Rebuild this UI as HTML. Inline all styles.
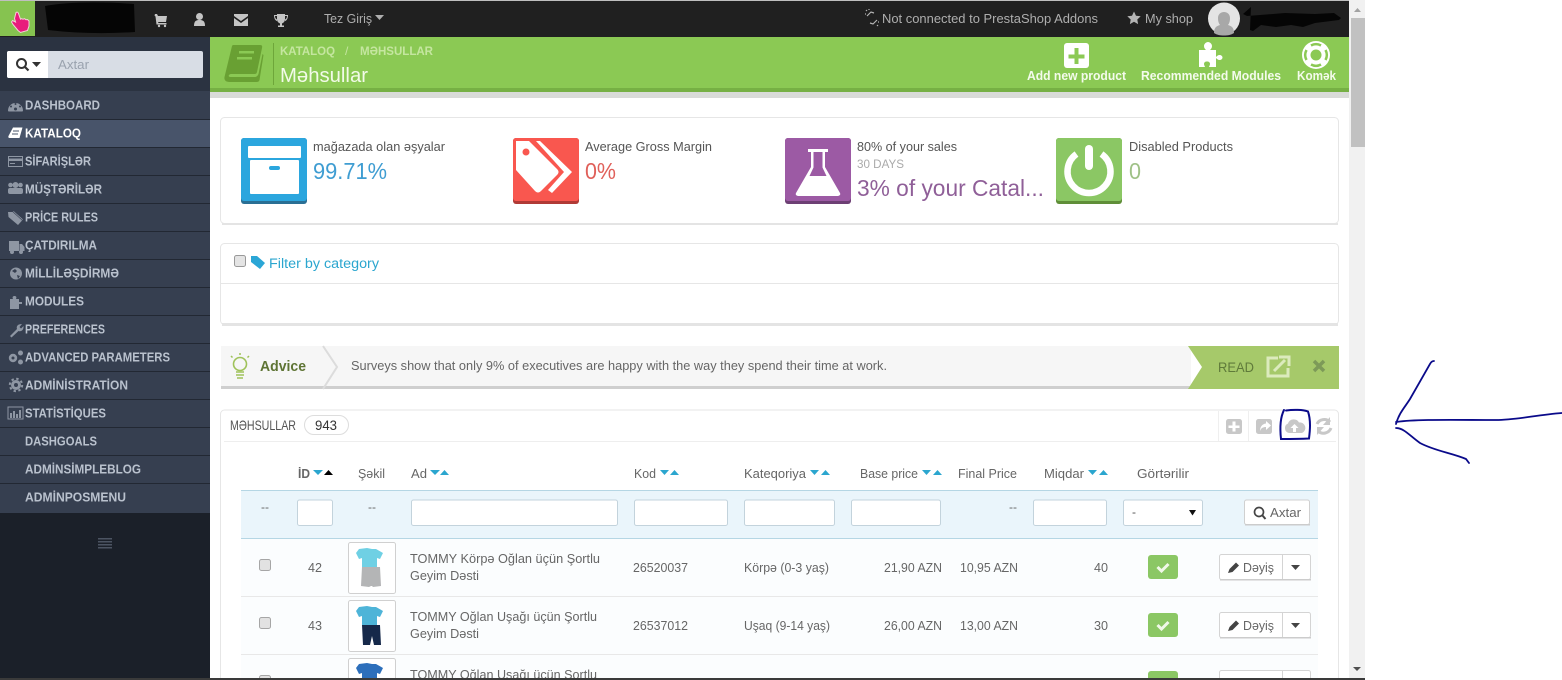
<!DOCTYPE html>
<html><head><meta charset="utf-8"><title>Məhsullar</title>
<style>
html,body{margin:0;padding:0;background:#fff;width:1562px;height:680px;overflow:hidden}
svg{display:block}
text{font-family:"Liberation Sans","DejaVu Sans",sans-serif;white-space:pre}
.m text{font-size:13px;font-weight:bold;fill:#b9c1cd}
.c text{font-size:13px;fill:#666}
.h text{font-size:13px;fill:#666}
.i{fill:#fff;stroke:#c3d3dc;stroke-width:1}
</style></head><body>
<svg xmlns="http://www.w3.org/2000/svg" width="1562" height="680" viewBox="0 0 1562 680">
<rect width="1562" height="680" fill="#fff"/>
<!-- sidebar -->
<rect x="0" y="37" width="210" height="643" fill="#1b2029"/>
<rect x="0" y="37" width="210" height="54" fill="#2b3341"/>
<rect x="0" y="91" width="210" height="422" fill="#363f50"/>
<rect x="0" y="120" width="210" height="27" fill="#48546a"/>
<g fill="#222833"><rect y="119" width="210" height="1"/><rect y="147" width="210" height="1"/><rect y="175" width="210" height="1"/><rect y="203" width="210" height="1"/><rect y="231" width="210" height="1"/><rect y="259" width="210" height="1"/><rect y="287" width="210" height="1"/><rect y="315" width="210" height="1"/><rect y="343" width="210" height="1"/><rect y="371" width="210" height="1"/><rect y="399" width="210" height="1"/><rect y="427" width="210" height="1"/><rect y="455" width="210" height="1"/><rect y="483" width="210" height="1"/></g>
<rect x="7" y="51" width="196" height="27" rx="2" fill="#d8dde5"/>
<path d="M9 51h39v27H9a2 2 0 0 1-2-2V53a2 2 0 0 1 2-2z" fill="#fff"/>
<circle cx="21.500" cy="63.500" r="4.500" fill="none" stroke="#333" stroke-width="2"/><path d="M25 67l3.500 3.500" stroke="#333" stroke-width="2.200"/>
<path d="M32 62h9l-4.500 5z" fill="#333"/>
<text x="58" y="69" font-size="12.500" fill="#9aa2ae" textLength="31" lengthAdjust="spacingAndGlyphs">Axtar</text>
<g class="m">
<text x="25" y="109.500" textLength="75" lengthAdjust="spacingAndGlyphs">DASHBOARD</text>
<text x="25" y="137.500" textLength="56" lengthAdjust="spacingAndGlyphs" style="fill:#fff">KATALOQ</text>
<text x="25" y="165.500" textLength="66" lengthAdjust="spacingAndGlyphs">SİFARİŞLƏR</text>
<text x="25" y="193.500" textLength="77" lengthAdjust="spacingAndGlyphs">MÜŞTƏRİLƏR</text>
<text x="25" y="221.500" textLength="73" lengthAdjust="spacingAndGlyphs">PRİCE RULES</text>
<text x="25" y="249.500" textLength="72" lengthAdjust="spacingAndGlyphs">ÇATDIRILMA</text>
<text x="25" y="277.500" textLength="94" lengthAdjust="spacingAndGlyphs">MİLLİLƏŞDİRMƏ</text>
<text x="25" y="305.500" textLength="59" lengthAdjust="spacingAndGlyphs">MODULES</text>
<text x="25" y="333.500" textLength="80" lengthAdjust="spacingAndGlyphs">PREFERENCES</text>
<text x="25" y="361.500" textLength="145" lengthAdjust="spacingAndGlyphs">ADVANCED PARAMETERS</text>
<text x="25" y="389.500" textLength="103" lengthAdjust="spacingAndGlyphs">ADMİNİSTRATİON</text>
<text x="25" y="417.500" textLength="81" lengthAdjust="spacingAndGlyphs">STATİSTİQUES</text>
<text x="25" y="445.500" textLength="72" lengthAdjust="spacingAndGlyphs">DASHGOALS</text>
<text x="25" y="473.500" textLength="116" lengthAdjust="spacingAndGlyphs">ADMİNSİMPLEBLOG</text>
<text x="25" y="501.500" textLength="101" lengthAdjust="spacingAndGlyphs">ADMİNPOSMENU</text>
</g>
<!-- sidebar icons -->
<g fill="#8e96a3">
<path d="M8 110.500a7.500 7.500 0 1 1 15 0c0 .8-.5 1-1 1h-13c-.5 0-1-.2-1-1z"/><g fill="#363f50"><circle cx="11" cy="106.500" r="1"/><circle cx="15.500" cy="104" r="1"/><circle cx="20" cy="106.500" r="1"/><circle cx="15.500" cy="109" r="1.500"/></g>
<path d="M13 127.500h9.500l-3 10.500H9.500c-1 0-1.500-1-1-2z" fill="#fff"/><path d="M13 131h6M12 134h6" stroke="#48546a"/>
<path d="M8.500 156.500h14v10h-14z" fill="none" stroke="#8e96a3"/><rect x="8" y="158.500" width="15" height="2.500"/><rect x="10" y="163" width="5" height="1"/>
<circle cx="10.500" cy="185" r="2.300"/><circle cx="20.500" cy="185" r="2.300"/><circle cx="15.500" cy="185" r="3"/><rect x="8" y="188" width="15" height="6" rx="2"/>
<path d="M8 212h6l9 7.500-5 5.500-9.500-8z"/><path d="M12 211l2 0 9 8 0 2z" stroke="#363f50" stroke-width=".6"/>
<path d="M9 241h10v10H9zM19.500 244h2.500l2.500 3v4h-5z"/><circle cx="12" cy="252" r="2"/><circle cx="21" cy="252" r="2"/>
<circle cx="16" cy="273.500" r="6"/><path d="M12 271l3-2 2 2-2 2zM17 275l3 1-2 3z" fill="#363f50"/>
<path d="M10 299h3c-1-2 0-3 1.500-3s2.500 1 1.500 3h3v3h3v2h-3v5h-9z"/>
<path d="M10 336l7-7c-1-3 1-5 5-5l-2.500 3 1.500 1.500 2.500-2.500c.5 4-2.500 6-5 5l-7 6.500z"/>
<circle cx="13" cy="358" r="4.200"/><circle cx="13" cy="358" r="1.500" fill="#363f50"/><circle cx="20.500" cy="353" r="2.500"/><circle cx="20.500" cy="362" r="2.500"/>
<circle cx="16" cy="385" r="5"/><circle cx="16" cy="385" r="6.200" fill="none" stroke="#8e96a3" stroke-width="2" stroke-dasharray="2.400 2.470"/><circle cx="16" cy="385" r="2" fill="#363f50"/>
<path d="M8 407h15v12H8z" fill="none" stroke="#8e96a3"/><path d="M10 413h2v5h-2zM13 411h2v7h-2zM16 414h2v4h-2zM19 410h2v8h-2z"/>
<g fill="#4c5462"><rect x="98" y="538" width="14" height="1.500"/><rect x="98" y="541" width="14" height="1.500"/><rect x="98" y="544" width="14" height="1.500"/><rect x="98" y="547" width="14" height="1.500"/></g>
</g>
<!-- top bar -->
<rect x="0" y="0" width="1349" height="37" fill="#202020"/>
<rect x="0" y="0" width="1349" height="1" fill="#bfbfbf"/>
<rect x="0" y="1" width="35" height="35" fill="#86c350"/>
<path d="M16 12.500c1-.8 2-.3 2.400.7l2.100 6 1-.5 1.500.5 1.500-.5 1.500 1 1.500-.2 1.500 1.500 0 5-1.500 4.500-7 2-2.500-2-5-6-1.500-2.500 1-1.500 3 1.500-1-3.500z" fill="#e81c7c" stroke="#f5cfd8" stroke-width="1"/>
<path d="M45 6Q80 0 134 4L135 32Q90 35 48 30z" fill="#050505"/>
<g fill="#c4c4c4">
<path d="M155 14h2l1 2h9l-1 6h-8l.5 1h8v1.500h-10l-1-8-1-1z"/><circle cx="159" cy="26" r="1.200"/><circle cx="165" cy="26" r="1.200"/>
<circle cx="199.500" cy="16.500" r="3.500"/><path d="M194 26c0-5 2-6 5.500-6s5.500 1 5.500 6z"/>
<path d="M234 14h14v2l-7 5-7-5zM234 18l7 5 7-5v8h-14z"/>
<path d="M277 14h8v5c0 3-2 4-3 4.500v2h2v1.500h-6V25.500h2v-2c-1-.5-3-1.500-3-4.500z"/><path d="M274 15h3v1h-2c0 2 1 3 2 3.500v1.500c-2-.5-3-3-3-6zM288 15h-3v1h2c0 2-1 3-2 3.500v1.500c2-.5 3-3 3-6z"/>
</g>
<text x="324" y="23" font-size="12.500" fill="#aeaeae" textLength="48" lengthAdjust="spacingAndGlyphs">Tez Giriş</text>
<path d="M375 15h9l-4.500 5z" fill="#aeaeae"/>
<g stroke="#b4b4b4" stroke-width="1.200" fill="none"><path d="M867 16l4-4 3 1M877 20l-4 4-3-1M867 11l-1-1M869 10v-1M877 25l1 1M866 14h-1M878 22h1"/></g>
<text x="882" y="23" font-size="12.500" fill="#aeaeae" textLength="216" lengthAdjust="spacingAndGlyphs">Not connected to PrestaShop Addons</text>
<path d="M1134 11.500l2 4.200 4.700.6-3.400 3.200.8 4.600-4.100-2.300-4.100 2.300.8-4.600-3.400-3.200 4.700-.6z" fill="#b4b4b4"/>
<text x="1145" y="23" font-size="12.500" fill="#aeaeae" textLength="48" lengthAdjust="spacingAndGlyphs">My shop</text>
<circle cx="1224" cy="18.500" r="16" fill="#e4e4e4"/>
<path d="M1214 33c0-6 3-7 6-8 -1.500-2-2-4-2-7 0-4 3-6 6-6s6 2 6 6c0 3-.5 5-2 7 3 1 6 2 6 8-3 2-6 2.500-10 2.500s-7-.5-10-2.500z" fill="#a8a8a8"/>
<path d="M1243 14l8-7-1 23 3 1 8-6 15 2 15-2 12 2 12-4 24-3 2-2-7-5-19 1-30-1-25 2-13 1z" fill="#050505"/>
<!-- green header -->
<rect x="210" y="37" width="1139" height="51" fill="#8bc954"/>
<rect x="210" y="88" width="1139" height="4" fill="#76b044"/>
<rect x="210" y="92" width="1139" height="6" fill="#d9dbd8"/>
<path d="M232 46c.5-1 1-1 2-1h26c2 0 2.500 1 2 3l-5 24c-.5 1.500-1 2-2.500 2h-23c-3 0-4 3-1 3h24c2 0 3-1 4-3l4-20 1 1-4 25c-.5 1.500-1.500 2-3 2h-27c-4 0-5.500-2-5-5z" fill="#69a033"/>
<rect x="239" y="51" width="15" height="2.500" fill="#8bc954"/><rect x="237" y="57" width="15" height="2.500" fill="#8bc954"/>
<rect x="273" y="43" width="1" height="42" fill="#6ea63a"/>
<text x="280" y="55" font-size="12" font-weight="bold" fill="#c5e6a0" textLength="55" lengthAdjust="spacingAndGlyphs">KATALOQ</text>
<text x="345" y="55" font-size="12" fill="#c5e6a0">/</text>
<text x="360" y="55" font-size="12" font-weight="bold" fill="#c5e6a0" textLength="73" lengthAdjust="spacingAndGlyphs">MƏHSULLAR</text>
<text x="280" y="82" font-size="20" fill="#f2fae8" textLength="88" lengthAdjust="spacingAndGlyphs">Məhsullar</text>
<rect x="1064" y="43" width="25" height="25" rx="3" fill="#fff"/>
<path d="M1074.500 48h4v6.500h6v4h-6V64h-4v-5.500h-6v-4h6z" fill="#8bc954"/>
<path d="M1199 50h7c-1-1-2-2-2-4 0-2 2-4 4-4s4 2 4 4c0 2-1 3-2 4h6v7c1-1 2-2 3.500-2 1.500 0 3 1 3 2.500s-1.500 2.500-3 2.500c-1.500 0-2.500-1-3.500-2v9h-7c.5-1.500 1-2 1-3 0-1.500-1-2.500-3-2.500s-3 1-3 2.500c0 1 .5 1.500 1 3h-6z" fill="#fff"/>
<circle cx="1316" cy="55" r="14" fill="#fff"/><circle cx="1316" cy="55" r="5.500" fill="#8bc954"/>
<g fill="none" stroke="#8bc954" stroke-width="2.500"><path d="M1311 45.500a10.500 10.500 0 0 1 10 0M1311 64.500a10.500 10.500 0 0 0 10 0M1306.500 50a10.500 10.500 0 0 0 0 10M1325.500 50a10.500 10.500 0 0 1 0 10"/></g>
<g font-size="12.500" font-weight="bold" fill="#f4fbec">
<text x="1027" y="80" textLength="99" lengthAdjust="spacingAndGlyphs">Add new product</text>
<text x="1141" y="80" textLength="140" lengthAdjust="spacingAndGlyphs">Recommended Modules</text>
<text x="1297" y="80" textLength="39" lengthAdjust="spacingAndGlyphs">Komək</text>
</g>
<!-- KPI panel -->
<rect x="220.500" y="117.500" width="1118" height="106" rx="4" fill="#fff" stroke="#e6e6e6"/>
<rect x="222" y="223" width="1116" height="2" fill="#e4e4e4"/>
<rect x="241" y="138" width="66" height="66" rx="3" fill="#2a6f94"/><rect x="241" y="138" width="66" height="63" rx="3" fill="#2ba6de"/>
<rect x="248" y="146" width="53" height="12" rx="1" fill="#fff"/><rect x="250" y="160" width="49" height="34" rx="1" fill="#fff"/><rect x="269" y="166" width="11" height="4" rx="2" fill="#2ba6de"/>
<rect x="513" y="138" width="66" height="66" rx="3" fill="#b03a36"/><rect x="513" y="138" width="66" height="63" rx="3" fill="#f9574f"/>
<path d="M516 141h13l28 28c2 2 2 4 0 6l-16 16c-2 2-4 2-6 0l-19-21z" fill="#fff"/>
<circle cx="526" cy="152" r="3.500" fill="#f9574f"/>
<path d="M540 141l32 31-20 21-4-3 16-18-28-31z" fill="#fff"/>
<rect x="785" y="138" width="66" height="66" rx="3" fill="#6d3f74"/><rect x="785" y="138" width="66" height="63" rx="3" fill="#9c5aa4"/>
<path d="M808 149h20v3h-3v15l15 26c1 2-1 3-3 3h-38c-2 0-4-1-3-3l15-26v-15h-3z" fill="#fff"/>
<path d="M813.500 152h9v15.500l4 8.500h-17l4-8.500z" fill="#9c5aa4"/>
<rect x="1056" y="138" width="66" height="66" rx="3" fill="#5f8e38"/><rect x="1056" y="138" width="66" height="63" rx="3" fill="#8bc764"/>
<path d="M1076.500 154a21.500 21.500 0 1 0 25 0" fill="none" stroke="#fff" stroke-width="6.500"/>
<rect x="1085" y="145" width="8" height="25" rx="4" fill="#fff"/>
<g font-size="13" fill="#555">
<text x="313" y="151" textLength="132" lengthAdjust="spacingAndGlyphs">mağazada olan əşyalar</text>
<text x="585" y="151" textLength="127" lengthAdjust="spacingAndGlyphs">Average Gross Margin</text>
<text x="857" y="151" textLength="100" lengthAdjust="spacingAndGlyphs">80% of your sales</text>
<text x="1129" y="151" textLength="104" lengthAdjust="spacingAndGlyphs">Disabled Products</text>
</g>
<text x="857" y="168" font-size="12" fill="#aaa" textLength="47" lengthAdjust="spacingAndGlyphs">30 DAYS</text>
<g font-size="23">
<text x="313" y="179" fill="#3f9dd2" textLength="74" lengthAdjust="spacingAndGlyphs">99.71%</text>
<text x="585" y="179" fill="#e0605a" textLength="31" lengthAdjust="spacingAndGlyphs">0%</text>
<text x="857" y="196" fill="#8f5f98" textLength="187" lengthAdjust="spacingAndGlyphs">3% of your Catal...</text>
<text x="1129" y="179" fill="#9fc187" textLength="12" lengthAdjust="spacingAndGlyphs">0</text>
</g>
<!-- filter panel -->
<rect x="220.500" y="243.500" width="1118" height="81" rx="4" fill="#fff" stroke="#e6e6e6"/>
<rect x="222" y="323" width="1116" height="3" fill="#e4e4e4"/>
<rect x="221" y="283" width="1117" height="1" fill="#e6e6e6"/>
<rect x="234.500" y="255.500" width="11" height="11" rx="2" fill="#e4e4e4" stroke="#999"/>
<path d="M251 256h6l8 7-5 6-9-7z" fill="#2ba6d6"/>
<text x="269" y="268" font-size="13.500" fill="#2ba6cf" textLength="110" lengthAdjust="spacingAndGlyphs">Filter by category</text>
<!-- advice -->
<rect x="221" y="346" width="970" height="40" fill="#f6f6f6"/>
<rect x="221" y="386" width="970" height="3" fill="#cfcfcf"/>
<path d="M323 346l14 21-14 22" fill="none" stroke="#dcdcdc" stroke-width="2"/>
<path d="M1188 346h151v43h-151l14-22z" fill="#a6c96a"/>
<circle cx="240" cy="364" r="6.500" fill="none" stroke="#9fc25a" stroke-width="1.600"/><path d="M236 372h8M236 375h8M237 378h6" stroke="#9fc25a" stroke-width="1.600"/><path d="M240 353v2M231 356l1.500 1.500M249 356l-1.500 1.500" stroke="#9fc25a" stroke-width="1.500"/>
<text x="260" y="371" font-size="14.500" font-weight="bold" fill="#5e7434" textLength="46" lengthAdjust="spacingAndGlyphs">Advice</text>
<text x="351" y="370" font-size="13" fill="#666" textLength="536" lengthAdjust="spacingAndGlyphs">Surveys show that only 9% of executives are happy with the way they spend their time at work.</text>
<text x="1218" y="372" font-size="13.500" fill="#5f7a3a" textLength="36" lengthAdjust="spacingAndGlyphs">READ</text>
<path d="M1278 358h-10v18h20v-8" fill="none" stroke="#dcebbd" stroke-width="3"/><path d="M1274 371l11-11M1279 357h10v9" fill="none" stroke="#dcebbd" stroke-width="3"/>
<path d="M1314 361l10 10M1324 361l-10 10" stroke="#7d9a58" stroke-width="3.500"/>
<!-- table panel -->
<path d="M220.500 680V414a4 4 0 0 1 4-4h1110a4 4 0 0 1 4 4v266" fill="#fff" stroke="#e6e6e6"/>
<rect x="224" y="441" width="1112" height="1" fill="#eeeeee"/>
<rect x="1218" y="411" width="1" height="30" fill="#efefef"/><rect x="1248" y="411" width="1" height="30" fill="#efefef"/>
<text x="230" y="430" font-size="14" fill="#555" textLength="66" lengthAdjust="spacingAndGlyphs">MƏHSULLAR</text>
<rect x="304.500" y="415.500" width="44" height="19" rx="9.500" fill="#fff" stroke="#ddd"/>
<text x="315" y="430" font-size="14" fill="#333" textLength="22" lengthAdjust="spacingAndGlyphs">943</text>
<g fill="#c8c8c8">
<rect x="1226" y="419" width="16" height="15" rx="2.500"/><path d="M1232.500 422h3v4h4v2.500h-4v3.500h-3v-3.500h-4V426h4z" fill="#fff" transform="translate(0,-.5)"/>
<rect x="1256" y="419" width="16" height="15" rx="2.500"/><path d="M1266 421l5 4.500-5 4.500v-3c-3 0-5 1-6 4 0-4 2-7 6-7.500z" fill="#fff"/>
<path d="M1289 433a5 5 0 0 1-1-9.500 6 6 0 0 1 11-1 5.500 5.500 0 0 1 3 10.500z"/><path d="M1294.500 424l4 4h-2.500v4h-3v-4h-2.500z" fill="#fff"/>
</g>
<g fill="none" stroke="#c8c8c8" stroke-width="3"><path d="M1317 424a8 8 0 0 1 13-2M1331 428a8 8 0 0 1-13 3"/></g>
<path d="M1330 417v8h-7zM1317 435v-8h7z" fill="#c8c8c8"/>
<!-- pen annotation -->
<g fill="none" stroke="#0a0a8a" stroke-width="1.800" stroke-linecap="round">
<path d="M1284 410c-4 8-4 20-3 29 9 0 18 0 28-.5 1-8 2-18-1-27-5-2-15-2-22-1" stroke-width="2"/>
<path d="M1434 361c-2 0-3 1-4 3l-20 35c-5 8-11 14-14 25"/>
<path d="M1396 422c20-3 60-2 100-2 20 0 40-5 66-7"/>
<path d="M1396 428c8 0 14 8 24 15 15 8 32 10 46 16l3 4"/>
</g>
<!-- headers -->
<g class="h">
<text x="298" y="478" font-weight="bold" textLength="12" lengthAdjust="spacingAndGlyphs">İD</text>
<text x="358" y="478" textLength="27" lengthAdjust="spacingAndGlyphs">Şəkil</text>
<text x="411" y="478" textLength="16" lengthAdjust="spacingAndGlyphs">Ad</text>
<text x="634" y="478" textLength="22" lengthAdjust="spacingAndGlyphs">Kod</text>
<text x="744" y="478" textLength="62" lengthAdjust="spacingAndGlyphs">Kateqoriya</text>
<text x="860" y="478" textLength="58" lengthAdjust="spacingAndGlyphs">Base price</text>
<text x="958" y="478" textLength="59" lengthAdjust="spacingAndGlyphs">Final Price</text>
<text x="1044" y="478" textLength="40" lengthAdjust="spacingAndGlyphs">Miqdar</text>
<text x="1137" y="478" textLength="52" lengthAdjust="spacingAndGlyphs">Görtərilir</text>
</g>
<g fill="#2ba6cf">
<path d="M313 470h10l-5 5z"/><path d="M430 470h10l-5 5z"/><path d="M440 475h9l-4.500-5z"/>
<path d="M660 470h9l-4.500 5z"/><path d="M670 475h9l-4.500-5z"/>
<path d="M810 470h9l-4.500 5z"/><path d="M821 475h9l-4.500-5z"/>
<path d="M922 470h9l-4.500 5z"/><path d="M933 475h9l-4.500-5z"/>
<path d="M1088 470h9l-4.500 5z"/><path d="M1099 475h9l-4.500-5z"/>
</g>
<path d="M324 475h9l-4.500-5z" fill="#000"/>
<!-- filter row -->
<rect x="241" y="490" width="1077" height="49" fill="#eaf5fb"/>
<rect x="241" y="490" width="1077" height="1" fill="#b5d6e4"/><rect x="241" y="538" width="1077" height="1" fill="#b5d6e4"/>
<g class="i">
<rect x="297.500" y="500" width="35" height="25.500" rx="2"/>
<rect x="411.500" y="500" width="206" height="25.500" rx="2"/>
<rect x="634.500" y="500" width="93" height="25.500" rx="2"/>
<rect x="744.500" y="500" width="90" height="25.500" rx="2"/>
<rect x="851.500" y="500" width="89" height="25.500" rx="2"/>
<rect x="1033.500" y="500" width="73" height="25.500" rx="2"/>
<rect x="1123.500" y="500" width="79" height="25.500" rx="2"/>
<rect x="1244.500" y="500" width="65" height="24.500" rx="2" stroke="#d0d0d0"/>
</g>
<rect x="1245" y="524" width="65" height="1.500" fill="#ccc"/>
<g font-size="12" fill="#666"><text x="261" y="511">--</text><text x="368" y="511">--</text><text x="1009" y="511">--</text></g>
<text x="1132" y="516" font-size="12" fill="#555">-</text>
<path d="M1189 510h7l-3.500 5.500z" fill="#111"/>
<circle cx="1259" cy="512" r="4.500" fill="none" stroke="#444" stroke-width="1.700"/><path d="M1262.500 515.500l3 3.500" stroke="#444" stroke-width="2"/>
<text x="1270" y="517" font-size="13" fill="#666" textLength="31" lengthAdjust="spacingAndGlyphs">Axtar</text>
<!-- rows -->
<rect x="241" y="539" width="1077" height="141" fill="#fbfdfe"/>
<rect x="241" y="596" width="1077" height="1" fill="#e8e8e8"/><rect x="241" y="654" width="1077" height="1" fill="#e8e8e8"/>
<g fill="#e2e2e2" stroke="#a6a6a6"><rect x="259.500" y="559.500" width="11" height="11" rx="2"/><rect x="259.500" y="617.500" width="11" height="11" rx="2"/><rect x="259.500" y="675.500" width="11" height="11" rx="2"/></g>
<g fill="#fff" stroke="#d0d0d0"><rect x="348.500" y="542.500" width="47" height="51" rx="2"/><rect x="348.500" y="600.500" width="47" height="51" rx="2"/><rect x="348.500" y="658.500" width="47" height="30" rx="2"/></g>
<path d="M359 549l8-1 5 1 4 0 7 4-3 6-3-1 0 9h-15v-9l-3 1-3-6z" fill="#6fd0e4"/>
<path d="M362 567h18l1 19-8 1-1-1h-1l-2 1-8-1z" fill="#b4b5b6"/>
<path d="M359 607l8-1 5 1 4 0 7 4-3 6-3-1 0 9h-15v-9l-3 1-3-6z" fill="#4eb4d8"/>
<path d="M362 625h18l1 20h-7l-2-9-2 9h-7z" fill="#16294a"/>
<path d="M359 664l8-1 5 1 4 0 7 4-3 6-3-1 0 9h-15v-9l-3 1-3-6z" fill="#2d6fbb"/>
<g class="c">
<text x="308" y="572" textLength="14" lengthAdjust="spacingAndGlyphs">42</text>
<text x="410" y="563" textLength="190" lengthAdjust="spacingAndGlyphs">TOMMY Körpə Oğlan üçün Şortlu</text>
<text x="410" y="580" textLength="69" lengthAdjust="spacingAndGlyphs">Geyim Dəsti</text>
<text x="633" y="572" textLength="55" lengthAdjust="spacingAndGlyphs">26520037</text>
<text x="744" y="572" textLength="85" lengthAdjust="spacingAndGlyphs">Körpə (0-3 yaş)</text>
<text x="884" y="572" textLength="58" lengthAdjust="spacingAndGlyphs">21,90 AZN</text>
<text x="960" y="572" textLength="58" lengthAdjust="spacingAndGlyphs">10,95 AZN</text>
<text x="1094" y="572" textLength="14" lengthAdjust="spacingAndGlyphs">40</text>
<text x="308" y="630" textLength="14" lengthAdjust="spacingAndGlyphs">43</text>
<text x="410" y="621" textLength="187" lengthAdjust="spacingAndGlyphs">TOMMY Oğlan Uşağı üçün Şortlu</text>
<text x="410" y="638" textLength="69" lengthAdjust="spacingAndGlyphs">Geyim Dəsti</text>
<text x="633" y="630" textLength="55" lengthAdjust="spacingAndGlyphs">26537012</text>
<text x="744" y="630" textLength="86" lengthAdjust="spacingAndGlyphs">Uşaq (9-14 yaş)</text>
<text x="884" y="630" textLength="58" lengthAdjust="spacingAndGlyphs">26,00 AZN</text>
<text x="960" y="630" textLength="58" lengthAdjust="spacingAndGlyphs">13,00 AZN</text>
<text x="1094" y="630" textLength="14" lengthAdjust="spacingAndGlyphs">30</text>
<text x="410" y="679" textLength="187" lengthAdjust="spacingAndGlyphs">TOMMY Oğlan Uşağı üçün Şortlu</text>
</g>
<g fill="#8bc764"><rect x="1148" y="555" width="30" height="24" rx="3"/><rect x="1148" y="613" width="30" height="24" rx="3"/><rect x="1148" y="671" width="30" height="24" rx="3"/></g>
<g fill="none" stroke="#f0f8e8" stroke-width="3"><path d="M1157.500 567l4 4 7-7"/><path d="M1157.500 625l4 4 7-7"/></g>
<g fill="#fff" stroke="#d4d4d4">
<rect x="1219.500" y="554.500" width="91" height="25" rx="2"/><path d="M1282.500 555v25" fill="none"/>
<rect x="1219.500" y="612.500" width="91" height="25" rx="2"/><path d="M1282.500 613v25" fill="none"/>
<rect x="1219.500" y="670.500" width="91" height="25" rx="2"/><path d="M1282.500 671v25" fill="none"/>
</g>
<rect x="1220" y="579" width="91" height="1.500" fill="#ccc"/><rect x="1220" y="637" width="91" height="1.500" fill="#ccc"/>
<g fill="#444">
<path d="M1228 573l1.500-4 6.500-6.500 3 3-6.500 6.500z"/><path d="M1228 631l1.500-4 6.500-6.500 3 3-6.500 6.500z"/>
<path d="M1291 565h9l-4.500 5z"/><path d="M1291 623h9l-4.500 5z"/>
</g>
<g font-size="13" fill="#666">
<text x="1243" y="572" textLength="31" lengthAdjust="spacingAndGlyphs">Dəyiş</text>
<text x="1243" y="630" textLength="31" lengthAdjust="spacingAndGlyphs">Dəyiş</text>
</g>
<!-- scrollbar -->
<rect x="1349" y="0" width="16" height="680" fill="#f1f1f1"/>
<rect x="1351" y="18" width="14" height="129" fill="#c1c1c1"/>
<path d="M1354 12h7l-3.500-4z" fill="#a3a3a3"/>
<path d="M1353 667h8l-4 4z" fill="#505050"/>
<rect x="0" y="678" width="1365" height="2" fill="#3a3a3a"/>
</svg>
</body></html>
